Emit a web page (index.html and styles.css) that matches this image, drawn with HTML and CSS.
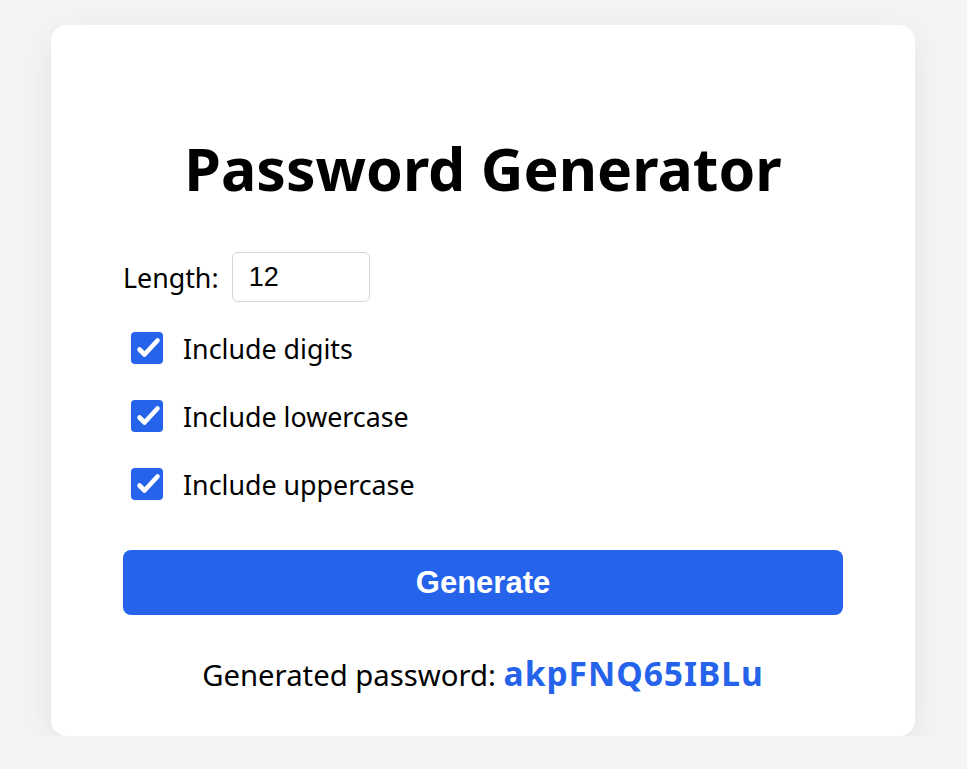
FILE: index.html
```html
<!DOCTYPE html>
<html lang="en">
<head>
<meta charset="utf-8">
<title>Password Generator</title>
<link rel="stylesheet" href="styles.css">
</head>
<body>
<main class="card">
  <h1 class="title">Password Generator</h1>
  <div class="field">
    <label class="label" for="len">Length:</label>
    <input class="num" id="len" type="text" value="12">
  </div>
  <label class="check">
    <span class="box"><svg viewBox="0 0 32 32" width="32" height="32"><path d="M8.5 17.5l5 5L26.5 8.5" fill="none" stroke="#fff" stroke-width="4.6" stroke-linecap="round" stroke-linejoin="round"/></svg></span>
    <span class="check-text">Include digits</span>
  </label>
  <label class="check">
    <span class="box"><svg viewBox="0 0 32 32" width="32" height="32"><path d="M8.5 17.5l5 5L26.5 8.5" fill="none" stroke="#fff" stroke-width="4.6" stroke-linecap="round" stroke-linejoin="round"/></svg></span>
    <span class="check-text">Include lowercase</span>
  </label>
  <label class="check">
    <span class="box"><svg viewBox="0 0 32 32" width="32" height="32"><path d="M8.5 17.5l5 5L26.5 8.5" fill="none" stroke="#fff" stroke-width="4.6" stroke-linecap="round" stroke-linejoin="round"/></svg></span>
    <span class="check-text">Include uppercase</span>
  </label>
  <button class="btn" type="button">Generate</button>
  <p class="result">Generated password: <strong class="pw">akpFNQ65IBLu</strong></p>
</main>
</body>
</html>
```
FILE: styles.css
```css
html, body {
  margin: 0;
  padding: 0;
  background: #f3f4f6;
}
body {
  padding-top: 25px;
  font-family: "Noto Sans", "Open Sans", sans-serif;
  color: #000;
}
.card {
  box-sizing: border-box;
  width: 864px;
  height: 711px;
  margin: 0 0 0 51px;
  background: #fff;
  border-radius: 16px;
  box-shadow: 0 10px 36px rgba(0, 0, 0, 0.07);
  padding: 108px 72px 0;
  display: flex;
  flex-direction: column;
}
.title {
  margin: 0 0 49px;
  text-align: center;
  font-size: 59px;
  line-height: 70px;
  font-weight: 700;
}
.field {
  display: flex;
  align-items: center;
  gap: 13px;
  height: 50px;
  margin-bottom: 3px;
}
.label {
  font-size: 26.8px;
}
.num {
  box-sizing: border-box;
  width: 138px;
  height: 50px;
  border: 1px solid #d1d5db;
  border-radius: 6px;
  padding: 0 16px;
  font-family: "Liberation Sans", Arial, sans-serif;
  font-size: 27px;
  color: #000;
  outline: none;
}
.check {
  display: flex;
  align-items: center;
  gap: 20px;
  margin-top: 18px;
  height: 50px;
  padding-left: 8px;
}
.box {
  width: 32px;
  height: 32px;
  border-radius: 4px;
  background: #2563eb;
  display: flex;
  align-items: center;
  justify-content: center;
}
.check-text {
  font-size: 26.8px;
}
.btn {
  margin-top: 41px;
  height: 65px;
  border: 0;
  border-radius: 8px;
  background: #2563eb;
  color: #fff;
  font-family: "Liberation Sans", Arial, sans-serif;
  font-weight: 700;
  font-size: 31px;
}
.result {
  margin: 38px 0 0;
  text-align: center;
  font-size: 29.3px;
  line-height: 40px;
}
.pw {
  color: #2563eb;
  font-weight: 700;
  font-size: 33.5px;
  letter-spacing: 1px;
}
```
